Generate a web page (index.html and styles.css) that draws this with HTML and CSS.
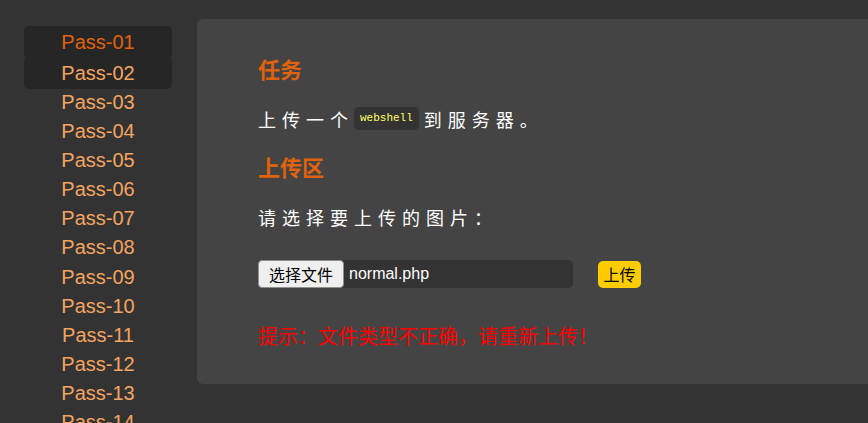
FILE: index.html
```html
<!DOCTYPE html>
<html lang="zh">
<head>
<meta charset="utf-8">
<title>Upload Labs</title>
<link rel="stylesheet" href="styles.css">
</head>
<body>
<div class="layout">
  <ul class="sidebar">
    <li class="item active current">Pass-01</li>
    <li class="item active">Pass-02</li>
    <li class="item">Pass-03</li>
    <li class="item">Pass-04</li>
    <li class="item">Pass-05</li>
    <li class="item">Pass-06</li>
    <li class="item">Pass-07</li>
    <li class="item">Pass-08</li>
    <li class="item">Pass-09</li>
    <li class="item">Pass-10</li>
    <li class="item">Pass-11</li>
    <li class="item">Pass-12</li>
    <li class="item">Pass-13</li>
    <li class="item">Pass-14</li>
  </ul>
  <main class="panel">
    <h2 class="title">任务</h2>
    <p class="text">上传一个<code class="code">webshell</code>到服务器。</p>
    <h2 class="title second">上传区</h2>
    <p class="text">请选择要上传的图片：</p>
    <div class="form-row">
      <div class="file">
        <span class="file-btn">选择文件</span>
        <span class="file-name">normal.php</span>
      </div>
      <span class="submit">上传</span>
    </div>
    <p class="msg">提示：文件类型不正确，请重新上传！</p>
  </main>
</div>
</body>
</html>
```
FILE: styles.css
```css
html, body {
  margin: 0;
  padding: 0;
  background: #333333;
  overflow: hidden;
}
body {
  font-family: "Liberation Sans", "Noto Sans CJK SC", sans-serif;
  height: 423px;
}
.layout {
  display: flex;
  align-items: flex-start;
  padding-top: 19px;
}
.sidebar {
  list-style: none;
  margin: 8.9px 0 0 24px;
  padding: 0;
  width: 148px;
  flex: none;
}
.item {
  font-size: 20px;
  line-height: 29.15px;
  text-align: center;
  color: #f4a460;
}
.item.active {
  background: #262626;
  border-radius: 5px;
  padding: 1.5px 0;
  margin: -1.5px 0;
  position: relative;
}
.item.current {
  color: #e0620a;
  padding-top: 2.4px;
  margin-top: -2.4px;
}
.panel {
  flex: 1;
  margin-left: 25px;
  height: 365px;
  box-sizing: border-box;
  background: #444444;
  border-radius: 6px 0 0 6px;
  padding: 34px 0 0 61px;
  font-family: "Noto Sans CJK SC", "Liberation Sans", sans-serif;
}
.title {
  margin: 0;
  font-size: 22px;
  line-height: 30px;
  font-weight: bold;
  color: #e0620a;
}
.title.second {
  margin-top: 20px;
}
.text {
  margin: 24px 0 0;
  font-size: 18px;
  line-height: 24px;
  letter-spacing: 6px;
  color: #ffffff;
}
.code {
  display: inline-block;
  vertical-align: top;
  height: 23px;
  line-height: 23px;
  padding: 0 6px;
  margin: 0 5px 0 0;
  background: #333333;
  border-radius: 5px;
  color: #ffff66;
  font-family: "Liberation Mono", monospace;
  font-size: 11px;
  letter-spacing: 0;
}
.form-row {
  display: flex;
  align-items: center;
  margin-top: 31px;
  height: 28px;
}
.file {
  display: flex;
  align-items: stretch;
  width: 315px;
  height: 28px;
  background: #333333;
  border-radius: 5px;
}
.file-btn {
  display: flex;
  align-items: center;
  justify-content: center;
  box-sizing: border-box;
  width: 86px;
  background: #efefef;
  border: 1px solid #8f8f8f;
  border-radius: 4px;
  color: #000000;
  font-size: 16px;
}
.file-name {
  display: flex;
  align-items: center;
  padding-left: 5px;
  color: #ffffff;
  font-family: "Liberation Sans", sans-serif;
  font-size: 16px;
}
.submit {
  margin-left: 25px;
  width: 43px;
  height: 27px;
  display: flex;
  align-items: center;
  justify-content: center;
  background: #ffcc00;
  border-radius: 5px;
  color: #000000;
  font-size: 16px;
}
.msg {
  margin: 36px 0 0;
  font-size: 20px;
  line-height: 24px;
  color: #ff0000;
}
```
